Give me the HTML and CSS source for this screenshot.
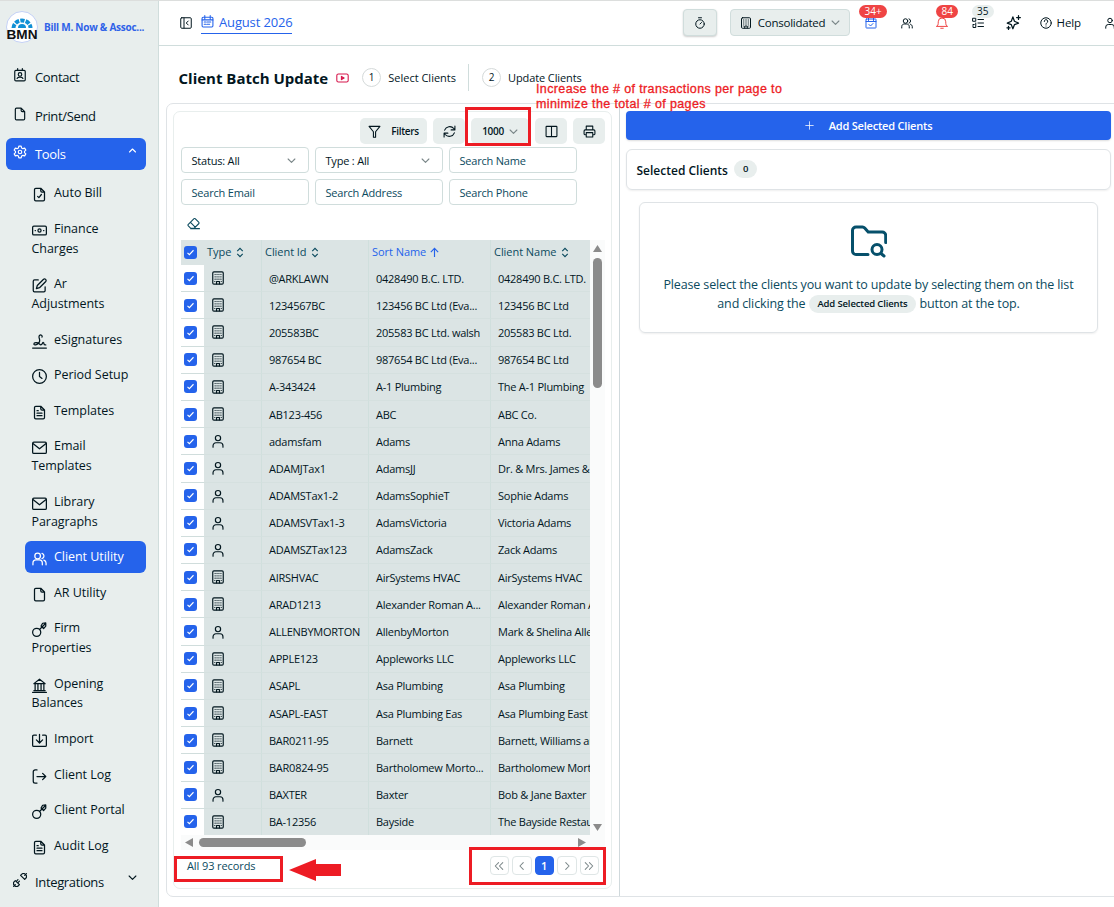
FILE: index.html
```html
<!DOCTYPE html>
<html lang="en">
<head>
  <meta charset="UTF-8" />
  <meta name="viewport" content="width=device-width, initial-scale=1" />
  <title>Client Batch Update</title>
  <link rel="stylesheet" href="styles.css">
</head>
<body>
  <!-- icon sprite -->
  <svg class="sprite" xmlns="http://www.w3.org/2000/svg">
    <symbol id="i-contact" viewBox="0 0 24 24"><path d="M5 4h14a2 2 0 0 1 2 2v14a2 2 0 0 1-2 2H5a2 2 0 0 1-2-2V6a2 2 0 0 1 2-2zM8 1v3M16 1v3M7 18c1-3 9-3 10 0"/><circle cx="12" cy="11" r="3"/></symbol>
    <symbol id="i-file" viewBox="0 0 24 24"><path d="M14 2v4a2 2 0 0 0 2 2h4M6 2h8l6 6v12a2 2 0 0 1-2 2H6a2 2 0 0 1-2-2V4a2 2 0 0 1 2-2z"/></symbol>
    <symbol id="i-filecheck" viewBox="0 0 24 24"><path d="M14 2v4a2 2 0 0 0 2 2h4M6 2h8l6 6v12a2 2 0 0 1-2 2H6a2 2 0 0 1-2-2V4a2 2 0 0 1 2-2zM9 15l2 2 4-5"/></symbol>
    <symbol id="i-filetext" viewBox="0 0 24 24"><path d="M14 2v4a2 2 0 0 0 2 2h4M6 2h8l6 6v12a2 2 0 0 1-2 2H6a2 2 0 0 1-2-2V4a2 2 0 0 1 2-2zM8 9h2M8 13h8M8 17h8"/></symbol>
    <symbol id="i-gear" viewBox="0 0 24 24"><path d="M10 2h4l.7 3 2.3 1.300 3-1 2 3.500-2.300 2.200v2l2.300 2.200-2 3.500-3-1-2.300 1.300-.7 3h-4l-.7-3L7 17.700l-3 1-2-3.500L4.300 13v-2L2 8.800l2-3.500 3 1L9.300 5z"/><circle cx="12" cy="12" r="3"/></symbol>
    <symbol id="i-up" viewBox="0 0 24 24"><path d="M4 16l8-8 8 8"/></symbol>
    <symbol id="i-down" viewBox="0 0 24 24"><path d="M3 8l9 9 9-9"/></symbol>
    <symbol id="i-left" viewBox="0 0 24 24"><path d="M15 4l-8 8 8 8"/></symbol>
    <symbol id="i-right" viewBox="0 0 24 24"><path d="M9 4l8 8-8 8"/></symbol>
    <symbol id="i-first" viewBox="0 0 24 24"><path d="M11 4l-8 8 8 8M21 4l-8 8 8 8"/></symbol>
    <symbol id="i-last" viewBox="0 0 24 24"><path d="M3 4l8 8-8 8M13 4l8 8-8 8"/></symbol>
    <symbol id="i-cash" viewBox="0 0 24 24"><rect x="1" y="5" width="22" height="14" rx="2"/><circle cx="12" cy="12" r="2.500"/><path d="M5 12h.5M18.500 12h.5"/></symbol>
    <symbol id="i-edit" viewBox="0 0 24 24"><path d="M10 3H4a2 2 0 0 0-2 2v15a2 2 0 0 0 2 2h15a2 2 0 0 0 2-2v-6M18.500 2a2.500 2.500 0 0 1 3.500 3.500L12 15.500l-5 1.500 1.500-5z"/></symbol>
    <symbol id="i-sign" viewBox="0 0 24 24"><path d="M1 22.500h22M16 5c1-3-2-4.500-4-2.500-3 3 3 7-1 11.500-3 3.500-8 4.500-8 2s6-3 9 0c2 2 4 1.500 5-1.500.5-1.500 2-1 2 .5s1 2.500 3 2.500"/></symbol>
    <symbol id="i-clock" viewBox="0 0 24 24"><circle cx="12" cy="12" r="11"/><path d="M12 5.500V12l4 3"/></symbol>
    <symbol id="i-mail" viewBox="0 0 24 24"><rect x="1" y="3.500" width="22" height="18" rx="2"/><path d="M2 6l10 8 10-8"/></symbol>
    <symbol id="i-users" viewBox="0 0 24 24"><circle cx="9" cy="8" r="4.500"/><path d="M1.500 22v-3c0-3 2.500-5 5-5h5c2.500 0 5 2 5 5v3M16 3.700a4.500 4.500 0 0 1 0 8.600M19 14.500c2 .8 3.500 2.500 3.500 4.500v3"/></symbol>
    <symbol id="i-user" viewBox="0 0 24 24"><circle cx="12" cy="7" r="4.500"/><path d="M3.500 22.500v-2.500a5 5 0 0 1 5-5h7a5 5 0 0 1 5 5v2.500"/></symbol>
    <symbol id="i-key" viewBox="0 0 24 24"><circle cx="7.500" cy="16.500" r="6.500"/><path d="M12 12L22 2M17 2l5-.500v5l-3.500 4-4-4z"/></symbol>
    <symbol id="i-bank" viewBox="0 0 24 24"><path d="M1 23h22M3 20h18M3 9h18L12 2zM5 10v9M9.500 10v9M14.500 10v9M19 10v9"/></symbol>
    <symbol id="i-import" viewBox="0 0 24 24"><path d="M7 3.500H3a2 2 0 0 0-2 2v14a2 2 0 0 0 2 2h18a2 2 0 0 0 2-2v-14a2 2 0 0 0-2-2h-4M12 2v13M7 11l5 5 5-5"/></symbol>
    <symbol id="i-logout" viewBox="0 0 24 24"><path d="M8 1.500H5a3 3 0 0 0-3 3v15a3 3 0 0 0 3 3h3M8 12h14M17 7l5 5-5 5"/></symbol>
    <symbol id="i-plug" viewBox="0 0 24 24"><path d="M1 23l3-3M20 4l3-3M4 13l7 7-1.500 1.500a4.900 4.900 0 0 1-7-7zM9 16l2-2M6.500 13.500l2-2M13 4l7 7 1.500-1.500a4.900 4.900 0 0 0-7-7z"/></symbol>
    <symbol id="i-panel" viewBox="0 0 24 24"><rect x="1.500" y="1.500" width="21" height="21" rx="2"/><path d="M8 2v20M16.500 8l-4 4 4 4"/></symbol>
    <symbol id="i-calendar" viewBox="0 0 24 24"><rect x="2" y="4" width="20" height="18" rx="2"/><path d="M7 1v6M17 1v6M2 9h20M6 13h3M11 13h7M6 17h3M11 17h5"/></symbol>
    <symbol id="i-calcheck" viewBox="0 0 24 24"><rect x="2" y="4" width="20" height="18" rx="1"/><path d="M7 1v6M17 1v6M2 9h20M8 15l3 3 5-5"/></symbol>
    <symbol id="i-timer" viewBox="0 0 24 24"><circle cx="12" cy="14" r="8.500"/><path d="M12 14l3-3M9 1.500h6"/></symbol>
    <symbol id="i-building" viewBox="0 0 24 24"><rect x="3" y="1.500" width="18" height="21" rx="2"/><path d="M9.500 22v-4h5v4M7 6h.1M10.300 6h.1M13.600 6h.1M17 6h.1M7 10h.1M10.300 10h.1M13.600 10h.1M17 10h.1M7 14h.1M10.300 14h.1M13.600 14h.1M17 14h.1M6.500 18h.1M17.500 18h.1"/></symbol>
    <symbol id="i-bell" viewBox="0 0 24 24"><path d="M1.500 18.500c2.500-1 3-3 3-9a7.500 7.500 0 0 1 15 0c0 6 .5 8 3 9zM9.500 22.500h5"/></symbol>
    <symbol id="i-list" viewBox="0 0 24 24"><path d="M12 5h11M12 12h11M12 19h11M2 2.500h5.500v6H2zM2 15l2.500 0M7.500 12v9H2v-4"/></symbol>
    <symbol id="i-sparkle" viewBox="0 0 24 24"><path d="M11 3l2.500 7L20 13l-6.500 2.500L11 22l-2.500-6.500L2 13l6.500-3zM20 1v6M17 4h6M4 18v5M1.500 20.500h5"/></symbol>
    <symbol id="i-help" viewBox="0 0 24 24"><circle cx="12" cy="12" r="10.500"/><path d="M8.500 9a3.500 3.500 0 1 1 5 3c-1 .6-1.500 1-1.500 2.500M12 18v.2"/></symbol>
    <symbol id="i-video" viewBox="0 0 24 18"><rect x="1.500" y="1.500" width="21" height="15" rx="3"/><path d="M10 6v6l5-3z" fill="currentColor"/></symbol>
    <symbol id="i-funnel" viewBox="0 0 24 24"><path d="M2 2.500h20l-8 10v10h-4v-10z"/></symbol>
    <symbol id="i-refresh" viewBox="0 0 24 24"><path d="M22 2v7h-7M2 22v-7h7M3 9.500A10 10 0 0 1 20 6.500l2 2.500M2 15l2 2.500A10 10 0 0 0 21 14.500"/></symbol>
    <symbol id="i-columns" viewBox="0 0 24 24"><rect x="2" y="2.500" width="20" height="19" rx="1"/><path d="M12 3v18"/></symbol>
    <symbol id="i-print" viewBox="0 0 24 24"><path d="M6 9V2h12v7M6 18H4a2 2 0 0 1-2-2v-5a2 2 0 0 1 2-2h16a2 2 0 0 1 2 2v5a2 2 0 0 1-2 2h-2M6 14h12v8H6z"/></symbol>
    <symbol id="i-eraser" viewBox="0 0 24 24"><path d="M7 21l-5-5a2 2 0 0 1 0-2L13 3a2 2 0 0 1 2 0l7 7a2 2 0 0 1 0 2l-9 9zM6.500 10l9 9M7 21.500h16"/></symbol>
    <symbol id="i-sort" viewBox="0 0 16 24"><path d="M2 9l6-6 6 6M2 15l6 6 6-6"/></symbol>
    <symbol id="i-arrowup" viewBox="0 0 24 24"><path d="M12 22V3M4 11l8-8 8 8"/></symbol>
    <symbol id="i-check" viewBox="0 0 24 24"><path d="M4 13l5 5L20 6"/></symbol>
    <symbol id="i-plus" viewBox="0 0 24 24"><path d="M12 2v20M2 12h20"/></symbol>
    <symbol id="i-foldersearch" viewBox="0 0 36 32"><path d="M17 29H5a3.500 3.500 0 0 1-3.500-3.500V5A3.500 3.500 0 0 1 5 1.500h6.500a3 3 0 0 1 2.200 1l3.500 4h14a3.500 3.500 0 0 1 3.500 3.500v7M30 28l3 2.500"/><circle cx="26" cy="24" r="5"/></symbol>
  </svg>

  <div class="app">
    <aside class="sidebar">
      <div class="brand">
        <svg class="logo" viewBox="0 0 32 32">
          <circle cx="16" cy="16" r="15.500" fill="#fff" stroke="#c3d0f5"/>
          <path d="M7.500 17a8.500 7.500 0 0 1 17 0" fill="none" stroke="#1090d5" stroke-width="4" stroke-dasharray="4.200 1.200"/>
          <path d="M12 17a4 4 0 0 1 8 0z" fill="#1090d5"/>
          <text x="16" y="27.500" text-anchor="middle" textLength="31" lengthAdjust="spacingAndGlyphs">BMN</text>
        </svg>
        <span>Bill M. Now &amp; Assoc...</span>
      </div>

      <nav class="menu">
        <a class="item"><svg class="icon"><use href="#i-contact"/></svg><span>Contact</span></a>
        <a class="item"><svg class="icon"><use href="#i-file"/></svg><span>Print/Send</span></a>
        <a class="item open"><svg class="icon"><use href="#i-gear"/></svg><span>Tools</span><svg class="icon caret"><use href="#i-up"/></svg></a>
        <div class="submenu">
          <a><svg class="icon"><use href="#i-filecheck"/></svg>Auto Bill</a>
          <a><svg class="icon"><use href="#i-cash"/></svg>Finance<br>Charges</a>
          <a><svg class="icon"><use href="#i-edit"/></svg>Ar<br>Adjustments</a>
          <a><svg class="icon"><use href="#i-sign"/></svg>eSignatures</a>
          <a><svg class="icon"><use href="#i-clock"/></svg>Period Setup</a>
          <a><svg class="icon"><use href="#i-filetext"/></svg>Templates</a>
          <a><svg class="icon"><use href="#i-mail"/></svg>Email<br>Templates</a>
          <a><svg class="icon"><use href="#i-mail"/></svg>Library<br>Paragraphs</a>
          <a class="active"><svg class="icon"><use href="#i-users"/></svg>Client Utility</a>
          <a><svg class="icon"><use href="#i-file"/></svg>AR Utility</a>
          <a><svg class="icon"><use href="#i-key"/></svg>Firm<br>Properties</a>
          <a><svg class="icon"><use href="#i-bank"/></svg>Opening<br>Balances</a>
          <a><svg class="icon"><use href="#i-import"/></svg>Import</a>
          <a><svg class="icon"><use href="#i-logout"/></svg>Client Log</a>
          <a><svg class="icon"><use href="#i-key"/></svg>Client Portal</a>
          <a><svg class="icon"><use href="#i-filetext"/></svg>Audit Log</a>
        </div>
        <a class="item last"><svg class="icon"><use href="#i-plug"/></svg><span>Integrations</span><svg class="icon caret"><use href="#i-down"/></svg></a>
      </nav>
    </aside>

    <main class="main">
      <header class="topbar">
        <svg class="icon sm"><use href="#i-panel"/></svg>
        <a class="month"><svg class="icon"><use href="#i-calendar"/></svg><span>August 2026</span></a>
        <div class="tools">
          <button class="timer"><svg class="icon"><use href="#i-timer"/></svg></button>
          <button class="scope"><svg class="icon"><use href="#i-building"/></svg><span>Consolidated</span><svg class="icon chev"><use href="#i-down"/></svg></button>
          <span class="tool blue"><svg class="icon"><use href="#i-calcheck"/></svg><b class="badge wide">34+</b></span>
          <span class="tool"><svg class="icon"><use href="#i-users"/></svg></span>
          <span class="tool red"><svg class="icon"><use href="#i-bell"/></svg><b class="badge">84</b></span>
          <span class="tool"><svg class="icon"><use href="#i-list"/></svg><b class="badge light">35</b></span>
          <span class="tool spark"><svg class="icon"><use href="#i-sparkle"/></svg></span>
          <span class="help"><svg class="icon"><use href="#i-help"/></svg><span>Help</span></span>
          <span class="tool"><svg class="icon"><use href="#i-user"/></svg></span>
        </div>
      </header>

      <div class="titlebar">
        <h1>Client Batch Update</h1>
        <svg class="icon video"><use href="#i-video"/></svg>
        <div class="step"><i>1</i><span>Select Clients</span></div>
        <div class="step second"><i>2</i><span>Update Clients</span></div>
      </div>

      <div class="panels">
        <section class="left">
          <div class="listcard">
            <div class="toolbar">
              <button class="filters"><svg class="icon"><use href="#i-funnel"/></svg><span>Filters</span></button>
              <button><svg class="icon"><use href="#i-refresh"/></svg></button>
              <button class="size"><span>1000</span><svg class="icon chev"><use href="#i-down"/></svg></button>
              <button><svg class="icon"><use href="#i-columns"/></svg></button>
              <button><svg class="icon"><use href="#i-print"/></svg></button>
            </div>
            <div class="search">
              <div class="field select"><span>Status: All</span><svg class="icon chev"><use href="#i-down"/></svg></div>
              <div class="field select"><span>Type : All</span><svg class="icon chev"><use href="#i-down"/></svg></div>
              <div class="field"><span>Search Name</span></div>
              <div class="field"><span>Search Email</span></div>
              <div class="field"><span>Search Address</span></div>
              <div class="field"><span>Search Phone</span></div>
            </div>
            <div class="eraser"><svg class="icon"><use href="#i-eraser"/></svg></div>

            <div class="grid">
              <div class="view">
                <table>
                  <colgroup><col class="c-check"><col class="c-type"><col class="c-id"><col class="c-sort"><col class="c-name"></colgroup>
                  <thead>
                    <tr>
                      <th><svg class="check"><use href="#i-check"/></svg></th>
                      <th>Type <svg class="sort"><use href="#i-sort"/></svg></th>
                      <th>Client Id <svg class="sort"><use href="#i-sort"/></svg></th>
                      <th class="sorted">Sort Name <svg class="sort up"><use href="#i-arrowup"/></svg></th>
                      <th>Client Name <svg class="sort"><use href="#i-sort"/></svg></th>
                    </tr>
                  </thead>
                  <tbody>
                    <tr><td><svg class="check"><use href="#i-check"/></svg></td><td><svg class="icon"><use href="#i-building"/></svg></td><td>@ARKLAWN</td><td>0428490 B.C. LTD.</td><td>0428490 B.C. LTD.</td></tr>
                    <tr><td><svg class="check"><use href="#i-check"/></svg></td><td><svg class="icon"><use href="#i-building"/></svg></td><td>1234567BC</td><td>123456 BC Ltd (Eva...</td><td>123456 BC Ltd</td></tr>
                    <tr><td><svg class="check"><use href="#i-check"/></svg></td><td><svg class="icon"><use href="#i-building"/></svg></td><td>205583BC</td><td>205583 BC Ltd. walsh</td><td>205583 BC Ltd.</td></tr>
                    <tr><td><svg class="check"><use href="#i-check"/></svg></td><td><svg class="icon"><use href="#i-building"/></svg></td><td>987654 BC</td><td>987654 BC Ltd (Eva...</td><td>987654 BC Ltd</td></tr>
                    <tr><td><svg class="check"><use href="#i-check"/></svg></td><td><svg class="icon"><use href="#i-building"/></svg></td><td>A-343424</td><td>A-1 Plumbing</td><td>The A-1 Plumbing</td></tr>
                    <tr><td><svg class="check"><use href="#i-check"/></svg></td><td><svg class="icon"><use href="#i-building"/></svg></td><td>AB123-456</td><td>ABC</td><td>ABC Co.</td></tr>
                    <tr><td><svg class="check"><use href="#i-check"/></svg></td><td><svg class="icon"><use href="#i-user"/></svg></td><td>adamsfam</td><td>Adams</td><td>Anna Adams</td></tr>
                    <tr><td><svg class="check"><use href="#i-check"/></svg></td><td><svg class="icon"><use href="#i-user"/></svg></td><td>ADAMJTax1</td><td>AdamsJJ</td><td>Dr. &amp; Mrs. James &amp;</td></tr>
                    <tr><td><svg class="check"><use href="#i-check"/></svg></td><td><svg class="icon"><use href="#i-user"/></svg></td><td>ADAMSTax1-2</td><td>AdamsSophieT</td><td>Sophie Adams</td></tr>
                    <tr><td><svg class="check"><use href="#i-check"/></svg></td><td><svg class="icon"><use href="#i-user"/></svg></td><td>ADAMSVTax1-3</td><td>AdamsVictoria</td><td>Victoria Adams</td></tr>
                    <tr><td><svg class="check"><use href="#i-check"/></svg></td><td><svg class="icon"><use href="#i-user"/></svg></td><td>ADAMSZTax123</td><td>AdamsZack</td><td>Zack Adams</td></tr>
                    <tr><td><svg class="check"><use href="#i-check"/></svg></td><td><svg class="icon"><use href="#i-building"/></svg></td><td>AIRSHVAC</td><td>AirSystems HVAC</td><td>AirSystems HVAC</td></tr>
                    <tr><td><svg class="check"><use href="#i-check"/></svg></td><td><svg class="icon"><use href="#i-building"/></svg></td><td>ARAD1213</td><td>Alexander Roman A...</td><td>Alexander Roman A</td></tr>
                    <tr><td><svg class="check"><use href="#i-check"/></svg></td><td><svg class="icon"><use href="#i-user"/></svg></td><td>ALLENBYMORTON</td><td>AllenbyMorton</td><td>Mark &amp; Shelina Allenby</td></tr>
                    <tr><td><svg class="check"><use href="#i-check"/></svg></td><td><svg class="icon"><use href="#i-building"/></svg></td><td>APPLE123</td><td>Appleworks LLC</td><td>Appleworks LLC</td></tr>
                    <tr><td><svg class="check"><use href="#i-check"/></svg></td><td><svg class="icon"><use href="#i-building"/></svg></td><td>ASAPL</td><td>Asa Plumbing</td><td>Asa Plumbing</td></tr>
                    <tr><td><svg class="check"><use href="#i-check"/></svg></td><td><svg class="icon"><use href="#i-building"/></svg></td><td>ASAPL-EAST</td><td>Asa Plumbing Eas</td><td>Asa Plumbing East</td></tr>
                    <tr><td><svg class="check"><use href="#i-check"/></svg></td><td><svg class="icon"><use href="#i-building"/></svg></td><td>BAR0211-95</td><td>Barnett</td><td>Barnett, Williams and</td></tr>
                    <tr><td><svg class="check"><use href="#i-check"/></svg></td><td><svg class="icon"><use href="#i-building"/></svg></td><td>BAR0824-95</td><td>Bartholomew Morto...</td><td>Bartholomew Morton</td></tr>
                    <tr><td><svg class="check"><use href="#i-check"/></svg></td><td><svg class="icon"><use href="#i-user"/></svg></td><td>BAXTER</td><td>Baxter</td><td>Bob &amp; Jane Baxter</td></tr>
                    <tr><td><svg class="check"><use href="#i-check"/></svg></td><td><svg class="icon"><use href="#i-building"/></svg></td><td>BA-12356</td><td>Bayside</td><td>The Bayside Restaurant</td></tr>
                  </tbody>
                </table>
              </div>
              <div class="vbar"><i class="tri up"></i><i class="thumb"></i><i class="tri down"></i></div>
              <div class="hbar"><i class="tri prev"></i><i class="thumb"></i><i class="tri next"></i></div>
            </div>

            <div class="footer">
              <span>All 93 records</span>
              <div class="pager">
                <button><svg class="icon"><use href="#i-first"/></svg></button>
                <button><svg class="icon"><use href="#i-left"/></svg></button>
                <button class="current">1</button>
                <button><svg class="icon"><use href="#i-right"/></svg></button>
                <button><svg class="icon"><use href="#i-last"/></svg></button>
              </div>
            </div>
          </div>
        </section>

        <section class="right">
          <button class="add"><svg class="icon"><use href="#i-plus"/></svg><span>Add Selected Clients</span></button>
          <div class="selected"><span>Selected Clients</span><b class="pill">0</b></div>
          <div class="empty">
            <svg class="folder"><use href="#i-foldersearch"/></svg>
            <p class="line1">Please select the clients you want to update by selecting them on the list</p>
            <p class="line2"><span>and clicking the</span><b class="pill">Add Selected Clients</b><span>button at the top.</span></p>
          </div>
        </section>
      </div>
    </main>
  </div>

  <!-- callouts drawn over the page -->
  <p class="note">Increase the # of transactions per page to<br>minimize the total # of pages</p>
  <div class="mark mark-size"></div>
  <div class="mark mark-records"></div>
  <div class="mark mark-pager"></div>
  <svg class="arrow" viewBox="0 0 52 22"><path d="M0 11L27 0v5h25v12H27v5z" fill="#ed1c24"/></svg>
</body>
</html>
```
FILE: styles.css
```css
* {
  box-sizing: border-box;
}
body {
  margin: 0;
  font-family: "Open Sans", "Noto Sans", sans-serif;
  font-size: 12px;
  color: #02161e;
  background: #fff;
  height: 907px;
  overflow: hidden;
  position: relative;
}
h1, p {
  margin: 0;
}
button {
  font: inherit;
  color: inherit;
  border: none;
  padding: 0;
  display: flex;
  align-items: center;
  justify-content: center;
}
span, a, button, th, td, h1, p {
  white-space: nowrap;
}
.sprite {
  display: none;
}
.icon {
  width: 14px;
  height: 14px;
  flex: none;
  fill: none;
  stroke: currentColor;
  stroke-width: 2;
  stroke-linecap: round;
  stroke-linejoin: round;
}
.chev {
  width: 9px;
  height: 9px;
  stroke: #7b8789;
  stroke-width: 3;
}
.app {
  display: flex;
  height: 907px;
  border-top: 1px solid #dcdedd;
}

/* sidebar */
.sidebar {
  width: 159px;
  flex: none;
  background: #e8eeed;
  border-right: 1px solid #d0dddc;
}
.brand {
  display: flex;
  align-items: center;
  gap: 6px;
  padding: 10px 0 0 6px;
  font-size: 10px;
  font-weight: 700;
  letter-spacing: -.25px;
  color: #2f62e8;
}
.logo {
  width: 32px;
  height: 32px;
  flex: none;
}
.logo text {
  font: 700 12px "Liberation Sans", sans-serif;
  letter-spacing: 0;
  fill: #111;
}
.menu {
  padding: 18px 12px 0 6px;
}
.item {
  display: flex;
  align-items: center;
  height: 32px;
  margin-bottom: 6.5px;
  padding: 0 9px 0 7px;
  gap: 8px;
  font-size: 13px;
  letter-spacing: -.35px;
  border-radius: 6px;
}
.item .icon {
  margin-top: -4px;
}
.item .caret {
  width: 9px;
  height: 9px;
  margin-left: auto;
  margin-top: -8px;
  stroke-width: 3;
}
.item.open {
  background: #2563eb;
  color: #fff;
}
.item.last {
  margin-top: 1px;
}
.submenu a {
  display: block;
  padding: 5.8px 0 5.8px 6.5px;
  margin-bottom: 4.2px;
  font-size: 12.5px;
  letter-spacing: -.05px;
  line-height: 19.8px;
  border-radius: 6px;
}
.submenu {
  padding: 1px 0 0 19px;
}
.submenu .icon {
  width: 15px;
  height: 15px;
  margin-right: 7.500px;
  vertical-align: -5px;
  margin-top: -5px;
}
.submenu .active {
  background: #2563eb;
  color: #fff;
}

/* top bar */
.main {
  flex: 1;
  min-width: 0;
  overflow: hidden;
}
.topbar {
  display: flex;
  align-items: center;
  height: 45px;
  padding: 0 0 1px 21px;
  border-bottom: 1px solid #d0dddc;
}
.topbar .icon {
  width: 12px;
  height: 12px;
}
.topbar .chev {
  width: 9px;
  height: 9px;
}
.month {
  display: flex;
  align-items: center;
  gap: 5px;
  width: 91px;
  height: 22px;
  margin-left: 9px;
  color: #2563eb;
  font-size: 13px;
  letter-spacing: -.15px;
  border-bottom: 1px solid #2563eb;
}
.topbar .month .icon {
  width: 13px;
  height: 13px;
  margin-top: -2px;
}
.tools {
  display: flex;
  align-items: center;
  margin-left: 391px;
}
.timer, .scope {
  height: 27px;
  background: #e8eeed;
  border: 1px solid #d0dddc;
  border-radius: 4px;
}
.timer {
  width: 34px;
  box-shadow: 0 1px 2px #0003;
}
.scope {
  width: 120px;
  margin-left: 13px;
  gap: 6px;
  font-size: 11.5px;
  letter-spacing: -.25px;
}
.tool {
  position: relative;
  display: flex;
  width: 12px;
  margin-left: 23.5px;
}
.scope + .tool {
  margin-left: 15px;
}
.blue { color: #2563eb; }
.red { color: #ef4444; }
.badge {
  position: absolute;
  left: 0;
  top: -12px;
  height: 13px;
  padding: 0 5.5px;
  border-radius: 7px;
  background: #ef4444;
  color: #fff;
  font-size: 10px;
  font-weight: 500;
  line-height: 13px;
}
.badge.wide {
  left: -6px;
}
.badge.light {
  background: #e8eeed;
  color: #02161e;
}
.topbar .spark .icon {
  width: 15px;
  height: 15px;
}
.tool.spark {
  margin-left: 22px;
}
.help {
  display: flex;
  align-items: center;
  gap: 5px;
  margin-left: 22px;
  font-size: 11.5px;
  letter-spacing: -.1px;
}

/* title row */
.titlebar {
  display: flex;
  align-items: center;
  height: 57px;
  padding: 7px 0 1px 19.5px;
}
h1 {
  font-size: 15px;
  font-weight: 700;
}
.video {
  width: 13px;
  height: 10px;
  margin-left: 8px;
  color: #d6174c;
}
.step {
  display: flex;
  align-items: center;
  height: 27px;
  margin-left: 13px;
  gap: 7px;
  font-size: 11px;
}
.step i {
  width: 19px;
  height: 19px;
  border: 1px solid #d5dada;
  border-radius: 50%;
  font-style: normal;
  font-size: 10px;
  line-height: 17px;
  text-align: center;
}
.step.second {
  margin-left: 12px;
  padding-left: 13px;
  letter-spacing: -.1px;
  border-left: 1px solid #d0dddc;
}

/* panels */
.panels {
  display: flex;
  width: 970px;
  height: 794px;
  margin-left: 7px;
  border: 1px solid #dfe3e6;
  border-radius: 7px;
}
.left {
  width: 453px;
  flex: none;
  padding: 7px 0 0 6px;
  border-right: 1px solid #d0d9dc;
}
.listcard {
  width: 439px;
  height: 778px;
  padding: 6px 6px 0 7px;
  border: 1px solid #e8eeed;
  border-radius: 7px;
}
.toolbar {
  display: flex;
  justify-content: flex-end;
  gap: 6px;
}
.toolbar button {
  width: 32px;
  height: 26px;
  border-radius: 5px;
  background: #e8eeed;
  font-size: 10px;
  font-weight: 600;
  letter-spacing: -.3px;
}
.toolbar .icon {
  width: 13px;
  height: 13px;
}
.toolbar .filters {
  width: 67px;
  gap: 10px;
}
.toolbar .size {
  width: 58px;
  gap: 5px;
}
.toolbar .chev {
  width: 9px;
  height: 9px;
}
.search {
  display: grid;
  grid-template-columns: repeat(3, 128px);
  gap: 6px;
  margin-top: 3px;
}
.field {
  display: flex;
  align-items: center;
  justify-content: space-between;
  height: 26px;
  padding: 0 12px 0 9.5px;
  border: 1px solid #d0dddc;
  border-radius: 4px;
  color: #0b4a5e;
  font-size: 11px;
  letter-spacing: -.2px;
}
.field.select {
  color: #02161e;
}
.eraser {
  height: 35px;
  padding: 12px 0 0 6px;
  color: #0b4a5e;
}
.eraser .icon {
  display: block;
  width: 13px;
  height: 13px;
}

/* client table */
.grid {
  display: grid;
  grid-template: 595px 15px / 409px 15px;
  background: #fafbfb;
}
.view {
  overflow: hidden;
}
table {
  width: 520px;
  table-layout: fixed;
  border-collapse: separate;
  border-spacing: 0;
  font-size: 11px;
  letter-spacing: -.25px;
}
.c-check { width: 23px; }
.c-type { width: 58px; }
.c-id { width: 107px; }
.c-sort { width: 122px; }
.c-name { width: 210px; }
th, td {
  overflow: hidden;
  text-align: left;
  font-weight: 400;
  background: #dbe4e4;
  border-right: 1px solid #d0dfdd;
}
th {
  height: 25px;
  padding: 0 3px 2px;
  letter-spacing: -.05px;
  color: #0b4a5e;
}
td {
  height: 27.2px;
  padding: 0 6px 0 7px;
  border-bottom: 1px solid #d5e0df;
}
th:first-child, td:first-child {
  padding: 0 0 0 3px;
  border-right: none;
}
td:first-child {
  background: #fff;
  border-bottom-color: #d0dddc;
}
td .icon, .check {
  display: block;
}
.check {
  width: 13px;
  height: 13px;
  border-radius: 3px;
  background: #2563eb;
  padding: 2px;
  fill: none;
  stroke: #fff;
  stroke-width: 3;
}
.sorted {
  color: #2563eb;
}
.sort {
  width: 8px;
  height: 11px;
  margin-left: 2px;
  vertical-align: -2px;
  fill: none;
  stroke: currentColor;
  stroke-width: 2.500;
}
.sort.up {
  width: 11px;
  margin-left: 0;
}
.vbar, .hbar {
  display: flex;
  align-items: center;
}
.vbar {
  flex-direction: column;
  padding: 5px 0 4px;
}
.hbar {
  padding: 0 4px;
}
.vbar .thumb {
  width: 9px;
  height: 130px;
  margin-top: 6px;
}
.hbar .thumb {
  width: 107px;
  height: 9px;
  margin-left: 6px;
}
.thumb {
  border-radius: 5px;
  background: #8b8b8b;
}
.tri {
  width: 9px;
  height: 7px;
  background: #8b8b8b;
  clip-path: polygon(50% 0, 100% 100%, 0 100%);
}
.tri.down {
  margin-top: auto;
  clip-path: polygon(0 0, 100% 0, 50% 100%);
}
.tri.prev, .tri.next {
  width: 8px;
  height: 9px;
}
.tri.prev {
  clip-path: polygon(0 50%, 100% 0, 100% 100%);
}
.tri.next {
  margin-left: auto;
  clip-path: polygon(0 0, 100% 50%, 0 100%);
}
.footer {
  display: flex;
  align-items: center;
  justify-content: space-between;
  height: 31px;
  padding: 0 6px;
  color: #0b4a5e;
  font-size: 11px;
  letter-spacing: -.1px;
}
.pager {
  display: flex;
  gap: 3px;
}
.pager button {
  width: 19.5px;
  height: 19px;
  border: 1px solid #dfe6e6;
  border-radius: 4px;
  background: #fff;
  color: #7b8789;
}
.pager .icon {
  width: 10px;
  height: 10px;
  stroke-width: 2.500;
}
.pager .current {
  background: #2563eb;
  border-color: #2563eb;
  color: #fff;
  font-weight: 600;
}

/* right panel */
.right {
  width: 498px;
  padding: 7px 6px;
}
.add {
  width: 485px;
  height: 29px;
  gap: 15px;
  padding-bottom: 1px;
  border-radius: 4px;
  background: #2563eb;
  color: #fff;
  font-size: 11px;
  font-weight: 600;
  letter-spacing: -.2px;
  box-shadow: 0 1px 2px #0002;
}
.add .icon {
  width: 9px;
  height: 9px;
}
.selected {
  display: flex;
  align-items: center;
  gap: 6px;
  width: 485px;
  height: 41px;
  margin-top: 9px;
  padding-left: 9.5px;
  border: 1px solid #dfe3e6;
  border-radius: 6px;
  font-size: 12px;
  font-weight: 600;
  box-shadow: 0 1px 2px #0001;
}
.selected span {
  padding-top: 1px;
}
.pill {
  height: 18px;
  padding: 0 9px;
  border-radius: 9px;
  background: #e8eeed;
  color: #02161e;
  font-size: 9.5px;
  font-weight: 600;
  line-height: 18px;
}
.selected .pill {
  margin-top: -1px;
}
.empty {
  display: flex;
  flex-direction: column;
  align-items: center;
  width: 459px;
  height: 131px;
  margin: 12px 0 0 13px;
  padding-top: 22px;
  border: 1px solid #dfe3e6;
  border-radius: 6px;
  color: #0b4a5e;
  font-size: 12.5px;
  letter-spacing: -.14px;
  line-height: 19px;
  box-shadow: 0 1px 2px #0001;
}
.folder {
  width: 36px;
  height: 33px;
  margin-bottom: 17px;
  fill: none;
  stroke: #06506b;
  stroke-width: 3;
  stroke-linecap: round;
}
.line2 {
  display: flex;
  align-items: center;
  gap: 4px;
}
.line2 .pill {
  padding: 0 8px;
}

/* callouts */
.note {
  position: absolute;
  left: 536px;
  top: 82px;
  color: #ed1c24;
  font: 12.5px/15px "Liberation Sans", Arial, sans-serif;
  letter-spacing: .37px;
  -webkit-text-stroke: .3px #ed1c24;
}
.mark {
  position: absolute;
  border: 3px solid #ed1c24;
}
.mark-size {
  left: 465px;
  top: 107px;
  width: 66px;
  height: 39px;
}
.mark-records {
  left: 174px;
  top: 856px;
  width: 109px;
  height: 26px;
}
.mark-pager {
  left: 469px;
  top: 847px;
  width: 137px;
  height: 38px;
}
.arrow {
  position: absolute;
  left: 289px;
  top: 859px;
  width: 52px;
  height: 22px;
}
```
